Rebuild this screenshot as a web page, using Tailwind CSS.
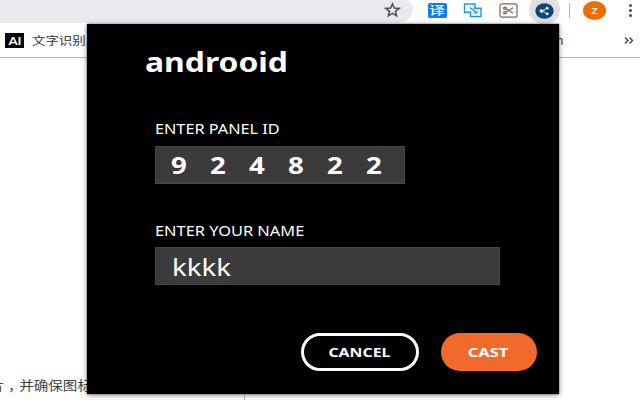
<!DOCTYPE html>
<html lang="en">
<head>
<meta charset="utf-8">
<title>Cast</title>
<script src="https://cdn.jsdelivr.net/npm/@tailwindcss/browser@4"></script>
</head>
<body class="relative h-[400px] w-[640px] overflow-hidden bg-white font-['Noto_Sans','Noto_Sans_CJK_SC',sans-serif] text-[#333]">
  <header class="flex h-6 items-start">
    <div class="flex h-[23px] w-[413px] shrink-0 justify-end rounded-br-[18px] rounded-tr-[10px] bg-[#e8eaed] pr-[12px] pt-[2px]">
      <svg class="h-[16px] w-[17px]" viewBox="0 0 24 24" preserveAspectRatio="none" fill="none" stroke="#50545a" stroke-width="2.300"><path d="M12 3l2.600 6.200 6.800.5-5.200 4.400 1.600 6.600L12 17.200l-5.800 3.500 1.600-6.600-5.200-4.400 6.800-.5z"/></svg>
    </div>
    <div class="ml-[15px] mt-[3px] flex h-[15px] w-[19px] shrink-0 items-center justify-center rounded-[2px] bg-[#0b7cf5] font-['Noto_Sans_CJK_SC',sans-serif] text-[12px] font-medium leading-none text-white"><span class="-mt-px scale-x-130">译</span></div>
    <svg class="ml-[16px] mt-[3px] h-[15px] w-[19px] shrink-0" viewBox="0 0 19 15" fill="none" stroke="#1a97f5" stroke-width="1.400"><path d="M7.500 9.300H1.500V1h10.500v4.300"/><path d="M12 5.300h6V13.500H7.500v-4.200"/><path d="M7 9.300h1.500M10.500 5.300H12M7 4.500l6.500 5.500"/><path d="M10.500 10h3.500V7.500" stroke-width="1"/></svg>
    <svg class="ml-[17px] mt-[3px] h-[15px] w-[19px] shrink-0" viewBox="0 0 19 15" fill="none" stroke="#8b6550"><rect x="1" y=".8" width="17" height="13.400" rx="2" stroke-width="1.200"/><g stroke-width="1.300"><ellipse cx="6" cy="5.300" rx="1.400" ry="1.100"/><ellipse cx="6" cy="9.700" rx="1.400" ry="1.100"/><path d="M7.200 6l7 4.200M7.200 9l7-4.200"/></g></svg>
    <div class="-mt-[5px] ml-[11px] flex h-[29px] w-[31px] shrink-0 items-center justify-center rounded-full bg-[#dfdfdf]">
      <svg class="mt-[2px] h-[16px] w-[19px]" viewBox="0 0 19 16"><ellipse cx="9.500" cy="8" rx="9.200" ry="7.800" fill="#08477c"/><path d="M12.500 5L6.500 8l6 3M6 8h4" stroke="#fff" fill="none" stroke-width=".7"/><g fill="#fff"><circle cx="6.300" cy="8" r="1.700"/><circle cx="12.200" cy="5.200" r="1.400"/><circle cx="12.200" cy="10.800" r="1.400"/></g></svg>
    </div>
    <div class="ml-[9px] mt-[3px] h-[15px] w-px shrink-0 bg-[#b5b5b5]"></div>
    <div class="ml-[13px] mt-px flex h-[19px] w-[23px] shrink-0 items-center justify-center rounded-[50%] bg-[#ef6c00] text-[11px] font-medium leading-none text-white"><span class="-mt-[2px] scale-x-125">z</span></div>
    <div class="ml-[22px] mt-[4px] flex w-[5px] shrink-0 flex-col items-center gap-[2px]">
      <i class="h-[3px] w-[3px] rounded-full bg-[#4a4d52]"></i><i class="h-[3px] w-[3px] rounded-full bg-[#4a4d52]"></i><i class="h-[3px] w-[3px] rounded-full bg-[#4a4d52]"></i>
    </div>
  </header>
  <nav class="flex h-[34px] items-center border-b border-[#b4b4b4] pl-[5px]">
    <div class="flex h-[15px] w-[19px] items-center justify-center bg-black font-['Lato',sans-serif] text-[12px] font-bold leading-none text-white"><span class="scale-x-110">AI</span></div>
    <span class="ml-[8px] w-[70px] origin-left scale-x-122 whitespace-nowrap font-['Noto_Sans_CJK_SC',sans-serif] text-[11px] leading-none text-[#333]">文字识别总</span>
    <span class="ml-[454px] w-[8px] text-[12px] leading-none text-[#333]">n</span>
    <svg class="ml-[60px] h-[7px] w-[10px]" viewBox="0 0 10 7" fill="none" stroke="#4a4d52" stroke-width="1.500"><path d="M1 .5l3 3-3 3M5.500 .5l3 3-3 3"/></svg>
  </nav>
  <main class="flex h-[342px] items-end">
    <p class="mb-[5px] w-[92px] shrink-0 whitespace-nowrap font-['Noto_Sans_CJK_SC',sans-serif] text-[13px] leading-[20px] text-[#444]"><span class="-ml-[10px] inline-block origin-left scale-x-112">片<span class="relative left-[3px]">，</span>并确保图标</span></p>
    <div class="ml-[152px] h-[5px] w-px bg-[#bbb]"></div>
  </main>

  <section class="absolute left-[87px] top-[24px] flex h-[370px] w-[472px] flex-col bg-black pl-[68px] text-white shadow-[0_1px_5px_rgba(0,0,0,0.5),0_0_1px_#333]">
    <h1 class="-ml-[10px] mt-[22px] h-[32px] w-fit origin-left scale-x-[1.225] whitespace-nowrap text-[26px] font-bold leading-[32px]">androoid</h1>
    <label class="mt-[41px] h-[20px] w-fit origin-left scale-x-[1.16] whitespace-nowrap text-[14px] leading-[20px]">ENTER PANEL ID</label>
    <div class="mt-[7px] grid h-[38px] w-[250px] grid-cols-[repeat(6,39px)] items-center border border-[#464646] bg-[#3b3b3b] pl-[15px] text-[23px] font-bold leading-none">
      <span class="w-fit origin-left scale-x-120">9</span><span class="w-fit origin-left scale-x-120">2</span><span class="w-fit origin-left scale-x-120">4</span><span class="w-fit origin-left scale-x-120">8</span><span class="w-fit origin-left scale-x-120">2</span><span class="w-fit origin-left scale-x-120">2</span>
    </div>
    <label class="mt-[37px] h-[20px] w-fit origin-left scale-x-[1.17] whitespace-nowrap text-[14px] leading-[20px]">ENTER YOUR NAME</label>
    <div class="mt-[6px] flex h-[38px] w-[345px] items-center border border-[#464646] bg-[#3b3b3b] pl-[16px] pt-[2px] text-[23px] leading-none"><span class="origin-left scale-x-120">kkkk</span></div>
    <div class="ml-[146px] mt-[48px] flex gap-[22px] text-[13px] font-bold leading-none">
      <button class="flex h-[38px] w-[118px] items-center justify-center rounded-full border-[3px] border-white"><span class="-ml-px scale-x-[1.22]">CANCEL</span></button>
      <button class="flex h-[38px] w-[96px] items-center justify-center rounded-full bg-[#f2692c]"><span class="-ml-px scale-x-[1.27]">CAST</span></button>
    </div>
  </section>
</body>
</html>
